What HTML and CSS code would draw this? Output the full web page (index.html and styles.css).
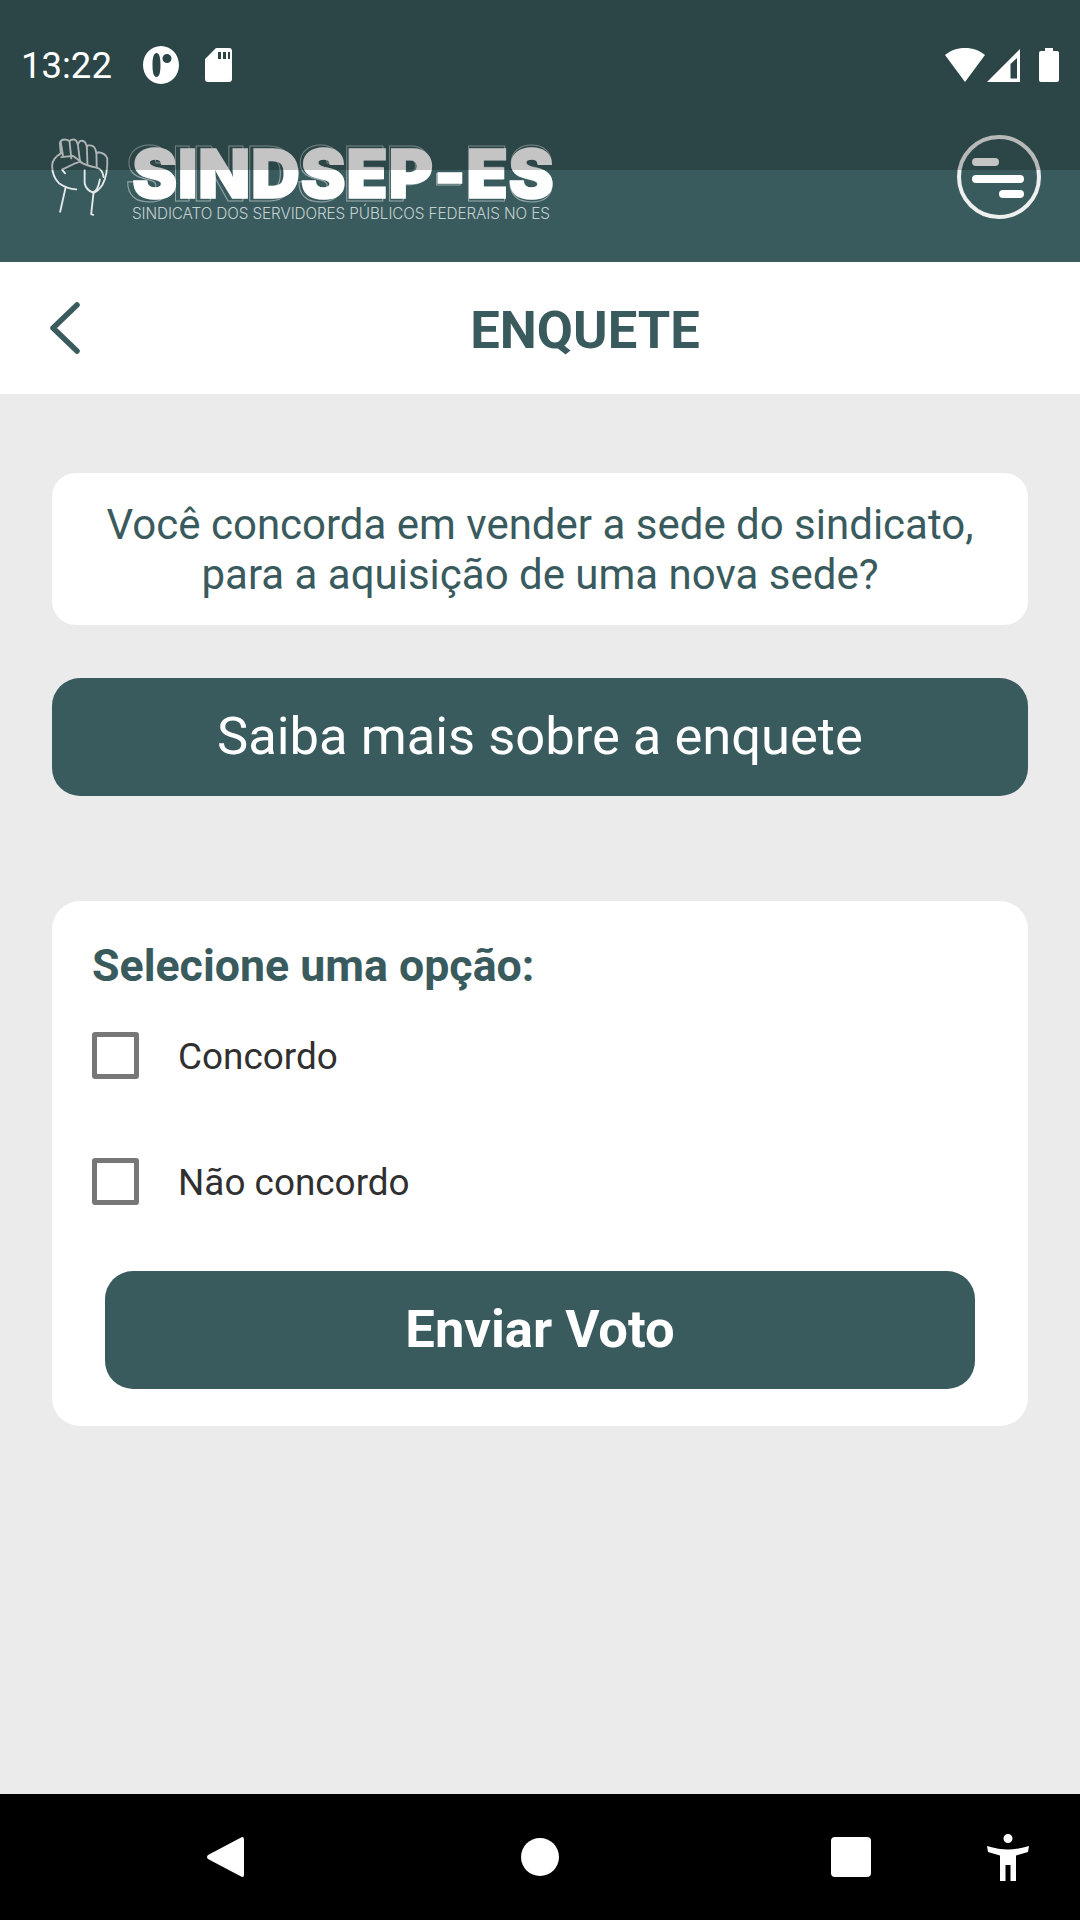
FILE: index.html
```html
<!DOCTYPE html>
<html lang="pt-BR">
<head>
    <meta charset="UTF-8">
    <meta name="viewport" content="width=device-width, initial-scale=1.0">
    <title>Enquete</title>
    <link rel="stylesheet" href="styles.css">
</head>
<body>
    <div class="screen">
        <header class="app-header">
            <div class="status-shade"></div>
            <div class="status-bar">
                <div class="status-left">
                    <span class="clock">13:22</span>
                    <svg class="ic-blob" viewBox="0 0 36 38"><path fill="#fff" fill-rule="evenodd" d="M18 0C28 0 36 8.500 36 19S28 38 18 38 0 29.500 0 19 8 0 18 0ZM13.500 7C10.500 7 9.500 12 9.500 19S10.500 31 13.500 31 17.500 26 17.500 19 16.500 7 13.500 7ZM24 8A4.500 4.500 0 1 0 24 17 4.500 4.500 0 1 0 24 8Z"/></svg>
                    <svg class="ic-sd" viewBox="0 0 27 34"><path fill="#fff" fill-rule="evenodd" d="M11 0H24Q27 0 27 3V31Q27 34 24 34H3Q0 34 0 31V11ZM13 4V11H16V4ZM18 4V11H21V4ZM23 4V11H25V4Z"/></svg>
                </div>
                <div class="status-right">
                    <svg class="ic-wifi" viewBox="0 0 40 34"><path fill="#fff" d="M20 0C28 0 34.500 2.500 40 7L20 34 0 7C5.500 2.500 12 0 20 0Z"/></svg>
                    <svg class="ic-signal" viewBox="0 0 34 33"><path fill="#fff" fill-rule="evenodd" d="M33 0V33H0ZM30 29.500V9L23.500 15V29.500Z"/></svg>
                    <svg class="ic-battery" viewBox="0 0 20 34"><path fill="#fff" d="M6 0H14V3H18Q20 3 20 5V32Q20 34 18 34H2Q0 34 0 32V5Q0 3 2 3H6Z"/></svg>
                </div>
            </div>
            <div class="brand-row">
                <div class="brand">
                    <svg class="fist" viewBox="50 40 200 264" fill="none" stroke="#e4e9e9" stroke-width="6" stroke-linecap="round" stroke-linejoin="round">
                        <path d="M88 95 85 62Q90 48 108 52L116 56 122 52Q138 48 140 60L143 66 150 56Q165 52 170 68L172 74 176 70Q196 68 200 84L203 96 208 92Q232 94 238 112 240 165 222 198 208 218 196 222"/>
                        <path d="M90 95Q60 112 60 135 60 170 82 192 108 210 138 212"/>
                        <path d="M88 60 95 102M116 56 122 112M143 66 150 122M172 74 174 128M203 96 204 142"/>
                        <path d="M90 108 128 104 152 122 130 130 92 148 102 160"/>
                        <path d="M152 124Q166 134 204 142 222 146 226 172M165 150 165 192Q170 215 192 222 208 216 214 180"/>
                        <path d="M104 204 86 284M194 220 186 292 193 294"/>
                    </svg>
                    <div class="brand-text">
                        <span class="brand-name" data-text="SINDSEP-ES">SINDSEP-ES</span>
                        <span class="brand-sub">SINDICATO DOS SERVIDORES PÚBLICOS FEDERAIS NO ES</span>
                    </div>
                </div>
                <button class="menu-btn" aria-label="Menu">
                    <span class="menu-bar bar-short"></span>
                    <span class="menu-bar bar-long"></span>
                    <span class="menu-bar bar-end"></span>
                </button>
            </div>
        </header>

        <div class="title-bar">
            <div class="back-box">
                <svg class="back-icon" viewBox="0 0 30 52" fill="none" stroke="#3a5b5e" stroke-width="5.500" stroke-linecap="round" stroke-linejoin="round"><path d="M27 3 3 26 27 49"/></svg>
            </div>
            <h1 class="page-title">ENQUETE</h1>
        </div>

        <main class="content">
            <div class="question-card">Você concorda em vender a sede do sindicato, para a aquisição de uma nova sede?</div>
            <button class="main-btn more-btn">Saiba mais sobre a enquete</button>

            <form class="vote-card">
                <h2 class="vote-title">Selecione uma opção:</h2>
                <label class="option"><input type="checkbox" class="check"><span class="option-text">Concordo</span></label>
                <label class="option"><input type="checkbox" class="check"><span class="option-text">Não concordo</span></label>
                <button type="button" class="main-btn send-btn">Enviar Voto</button>
            </form>
        </main>

        <nav class="nav-bar">
            <svg class="nav-back" viewBox="0 0 38 42"><path fill="#fff" d="M36 0.500Q38 0 38 3V39Q38 42 36 41.500L1 23Q-1 21 1 19Z"/></svg>
            <span class="nav-home"></span>
            <span class="nav-recent"></span>
            <svg class="nav-access" viewBox="0 0 42 47"><path fill="#fff" d="M21 0A4.500 4.500 0 1 1 21 9 4.500 4.500 0 1 1 21 0ZM0 12Q12 15.500 21 15.500T42 12L41 18 29 21.500V47H23.500V31H18.500V47H13V21.500L1 18Z"/></svg>
        </nav>
    </div>
</body>
</html>
```

FILE: styles.css
```css
* { box-sizing: border-box; }
body { margin: 0; font-family: Roboto, "Liberation Sans", sans-serif; background: #ebebeb; }
button { font-family: inherit; border: none; padding: 0; }
.screen { width: 1080px; height: 1920px; display: flex; flex-direction: column; overflow: hidden; }

/* header + android status bar */
.app-header { position: relative; height: 262px; background: #3a5b5e; flex-shrink: 0; }
.status-shade { position: absolute; top: 0; left: 0; right: 0; height: 170px; background: rgba(0, 0, 0, 0.23); z-index: 2; }
.status-bar { position: relative; z-index: 3; height: 130px; display: flex; justify-content: space-between; align-items: center; padding: 0 21px; }
.status-left, .status-right { display: flex; align-items: center; }
.clock { color: #fff; font-size: 36.500px; width: 122px; }
.ic-blob { width: 36px; height: 38px; margin-right: 26px; }
.ic-sd { width: 27px; height: 34px; }
.ic-wifi { width: 40px; height: 34px; margin-right: 2px; }
.ic-signal { width: 34px; height: 33px; margin-right: 18px; }
.ic-battery { width: 20px; height: 34px; }

.brand-row { display: flex; justify-content: space-between; align-items: center; height: 94px; padding: 0 39px 0 49px; }
.brand { display: flex; align-items: center; }
.fist { width: 62px; height: 88px; margin-right: 21px; }
.brand-text { display: flex; flex-direction: column; padding-top: 12px; }
.brand-name { position: relative; color: #fff; font-family: Inter, Roboto, sans-serif; font-weight: 900; font-size: 68px; line-height: 58px; width: 424px; white-space: nowrap; letter-spacing: 0.500px; -webkit-text-stroke: 1.500px #fff; }
.brand-name::before { content: attr(data-text); position: absolute; left: -3px; top: 0; color: transparent; -webkit-text-stroke: 1px rgba(255, 255, 255, 0.45); transform: scale(1.015, 1.11); }
.brand-sub { margin-top: 3px; color: #c4d0d0; font-family: Inter, sans-serif; font-weight: 300; font-size: 15.300px; line-height: 18px; white-space: nowrap; letter-spacing: -0.100px; }

.menu-btn { position: relative; width: 84px; height: 84px; border-radius: 50%; border: 4px solid #eef0f0; background: transparent; }
.menu-bar { position: absolute; height: 8px; border-radius: 4px; background: #fff; }
.bar-short { left: 11px; top: 19px; width: 27px; }
.bar-long { left: 11px; top: 36px; width: 52px; }
.bar-end { left: 38px; top: 51px; width: 25px; }

/* title */
.title-bar { height: 132px; background: #fff; display: flex; align-items: center; flex-shrink: 0; }
.back-box { width: 90px; padding-left: 50px; display: flex; }
.back-icon { width: 30px; height: 52px; }
.page-title { flex: 1; margin: 4px 0 0; text-align: center; color: #3a5b5e; font-size: 52.500px; font-weight: 700; }

/* main */
.content { flex: 1; padding: 79px 52px 0; }
.question-card { background: #fff; border-radius: 24px; height: 152px; padding: 27px 30px 0; text-align: center; color: #3a5b5e; font-size: 42px; line-height: 50px; }
.main-btn { display: block; background: #3a5b5e; color: #fff; border-radius: 28px; height: 118px; text-align: center; }
.more-btn { width: 100%; margin-top: 53px; font-size: 52.500px; padding-bottom: 2px; }
.vote-card { background: #fff; border-radius: 28px; height: 525px; margin-top: 105px; padding: 40px 40px 0; }
.vote-title { margin: 0 0 41px; color: #3a5b5e; font-size: 44.700px; line-height: 50px; font-weight: 700; }
.option { display: flex; align-items: center; height: 47px; margin-bottom: 79px; color: #303030; font-size: 36.900px; }
.option-text { padding-top: 2px; }
.check { appearance: none; width: 47px; height: 47px; margin: 0 39px 0 0; border: 5px solid #777; border-radius: 3px; background: #fff; }
.send-btn { width: 870px; margin: -13px 0 0 13px; padding-bottom: 2px; font-size: 52.500px; font-weight: 700; }

/* android nav */
.nav-bar { position: relative; height: 126px; background: #000; flex-shrink: 0; }
.nav-back { position: absolute; left: 207px; top: 42px; width: 37px; height: 42px; }
.nav-home { position: absolute; left: 521px; top: 44px; width: 38px; height: 38px; border-radius: 50%; background: #fff; }
.nav-recent { position: absolute; left: 831px; top: 43px; width: 40px; height: 40px; border-radius: 4px; background: #fff; }
.nav-access { position: absolute; left: 987px; top: 40px; width: 42px; height: 47px; }
```
